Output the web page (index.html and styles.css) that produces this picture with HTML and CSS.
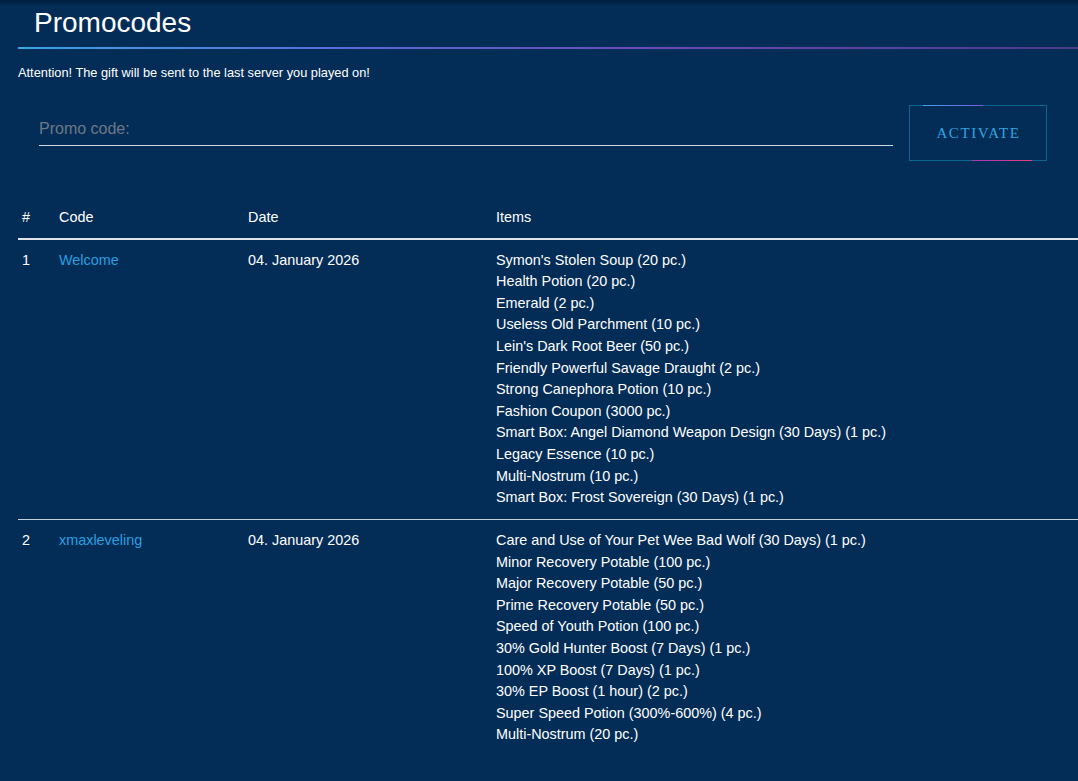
FILE: index.html
```html
<!DOCTYPE html>
<html lang="en">
<head>
<meta charset="utf-8">
<title>Promocodes</title>
<link rel="stylesheet" href="styles.css">
</head>
<body>
<main class="page">
  <h1 class="title">Promocodes</h1>
  <p class="notice">Attention! The gift will be sent to the last server you played on!</p>
  <form class="redeem">
    <div class="field">
      <input class="code-input" type="text" placeholder="Promo code:">
    </div>
    <button class="activate" type="button">Activate</button>
  </form>
  <div class="table">
    <div class="row head">
      <div class="cell">#</div>
      <div class="cell">Code</div>
      <div class="cell">Date</div>
      <div class="cell">Items</div>
    </div>
    <div class="row">
      <div class="cell">1</div>
      <div class="cell"><a class="code" href="#">Welcome</a></div>
      <div class="cell">04. January 2026</div>
      <div class="cell items">
        <div>Symon's Stolen Soup (20 pc.)</div>
        <div>Health Potion (20 pc.)</div>
        <div>Emerald (2 pc.)</div>
        <div>Useless Old Parchment (10 pc.)</div>
        <div>Lein's Dark Root Beer (50 pc.)</div>
        <div>Friendly Powerful Savage Draught (2 pc.)</div>
        <div>Strong Canephora Potion (10 pc.)</div>
        <div>Fashion Coupon (3000 pc.)</div>
        <div>Smart Box: Angel Diamond Weapon Design (30 Days) (1 pc.)</div>
        <div>Legacy Essence (10 pc.)</div>
        <div>Multi-Nostrum (10 pc.)</div>
        <div>Smart Box: Frost Sovereign (30 Days) (1 pc.)</div>
      </div>
    </div>
    <div class="row">
      <div class="cell">2</div>
      <div class="cell"><a class="code" href="#">xmaxleveling</a></div>
      <div class="cell">04. January 2026</div>
      <div class="cell items">
        <div>Care and Use of Your Pet Wee Bad Wolf (30 Days) (1 pc.)</div>
        <div>Minor Recovery Potable (100 pc.)</div>
        <div>Major Recovery Potable (50 pc.)</div>
        <div>Prime Recovery Potable (50 pc.)</div>
        <div>Speed of Youth Potion (100 pc.)</div>
        <div>30% Gold Hunter Boost (7 Days) (1 pc.)</div>
        <div>100% XP Boost (7 Days) (1 pc.)</div>
        <div>30% EP Boost (1 hour) (2 pc.)</div>
        <div>Super Speed Potion (300%-600%) (4 pc.)</div>
        <div>Multi-Nostrum (20 pc.)</div>
      </div>
    </div>
  </div>
</main>
</body>
</html>
```
FILE: styles.css
```css
html, body {
  margin: 0;
  padding: 0;
}
body {
  background: linear-gradient(to bottom, #01203f 0, #032d57 7px) no-repeat, #032d57;
  color: #ffffff;
  font-family: "Liberation Sans", Arial, sans-serif;
  overflow: hidden;
}
.page {
  margin-left: 18px;
}
.title {
  margin: 0;
  height: 47px;
  line-height: 46px;
  padding-left: 16px;
  font-size: 28px;
  font-weight: normal;
  color: #ffffff;
  border-bottom: 2px solid transparent;
  border-image: linear-gradient(to right, #3aa3e3 0%, #5a6ad8 30%, #6a4ab8 60%, #4a3a8c 100%) 1;
}
.notice {
  margin: 16px 0 0;
  font-size: 12.8px;
  line-height: 16px;
  color: #ffffff;
}
.redeem {
  display: flex;
  align-items: flex-start;
  gap: 16px;
  margin-top: 24px;
  padding: 0 31px 0 21px;
}
.field {
  flex: 1;
  padding-top: 1px;
}
.code-input {
  display: block;
  width: 100%;
  box-sizing: border-box;
  height: 40px;
  padding: 6px 0 0;
  background: transparent;
  border: 0;
  border-bottom: 1px solid #cfd6de;
  outline: none;
  font-family: "Liberation Sans", Arial, sans-serif;
  font-size: 16px;
  color: #ffffff;
}
.code-input::placeholder {
  color: #6d7886;
}
.activate {
  position: relative;
  width: 138px;
  height: 56px;
  background: transparent;
  border: 1px solid #0a6890;
  color: #30a4e2;
  font-family: "Liberation Serif", "Times New Roman", serif;
  font-size: 15px;
  letter-spacing: 1.6px;
  text-transform: uppercase;
  padding: 0 0 0 1px;
  cursor: pointer;
}
.activate::before,
.activate::after {
  content: "";
  position: absolute;
  width: 60px;
  height: 1px;
}
.activate::before {
  top: -1px;
  left: 13px;
  background: linear-gradient(to right, #3ea4e6, #7a5ae2);
}
.activate::after {
  bottom: -1px;
  right: 14px;
  background: linear-gradient(to right, #a03cba, #ec3a7c);
}
.table {
  margin-top: 46px;
  font-size: 14.4px;
  line-height: 1.5;
}
.row {
  display: grid;
  grid-template-columns: 37px 189px 248px 1fr;
  border-top: 1px solid #c6ced8;
}
.row.head {
  border-top: 0;
  border-bottom: 1px solid #dfe4ea;
}
.row.head + .row {
  border-top: 1px solid #dfe4ea;
}
.cell {
  padding: 10px 4px 10px;
  white-space: nowrap;
}
.row.head .cell {
  padding: 0 4px 9px;
}
.code {
  color: #2a9fe0;
  text-decoration: none;
}
```
